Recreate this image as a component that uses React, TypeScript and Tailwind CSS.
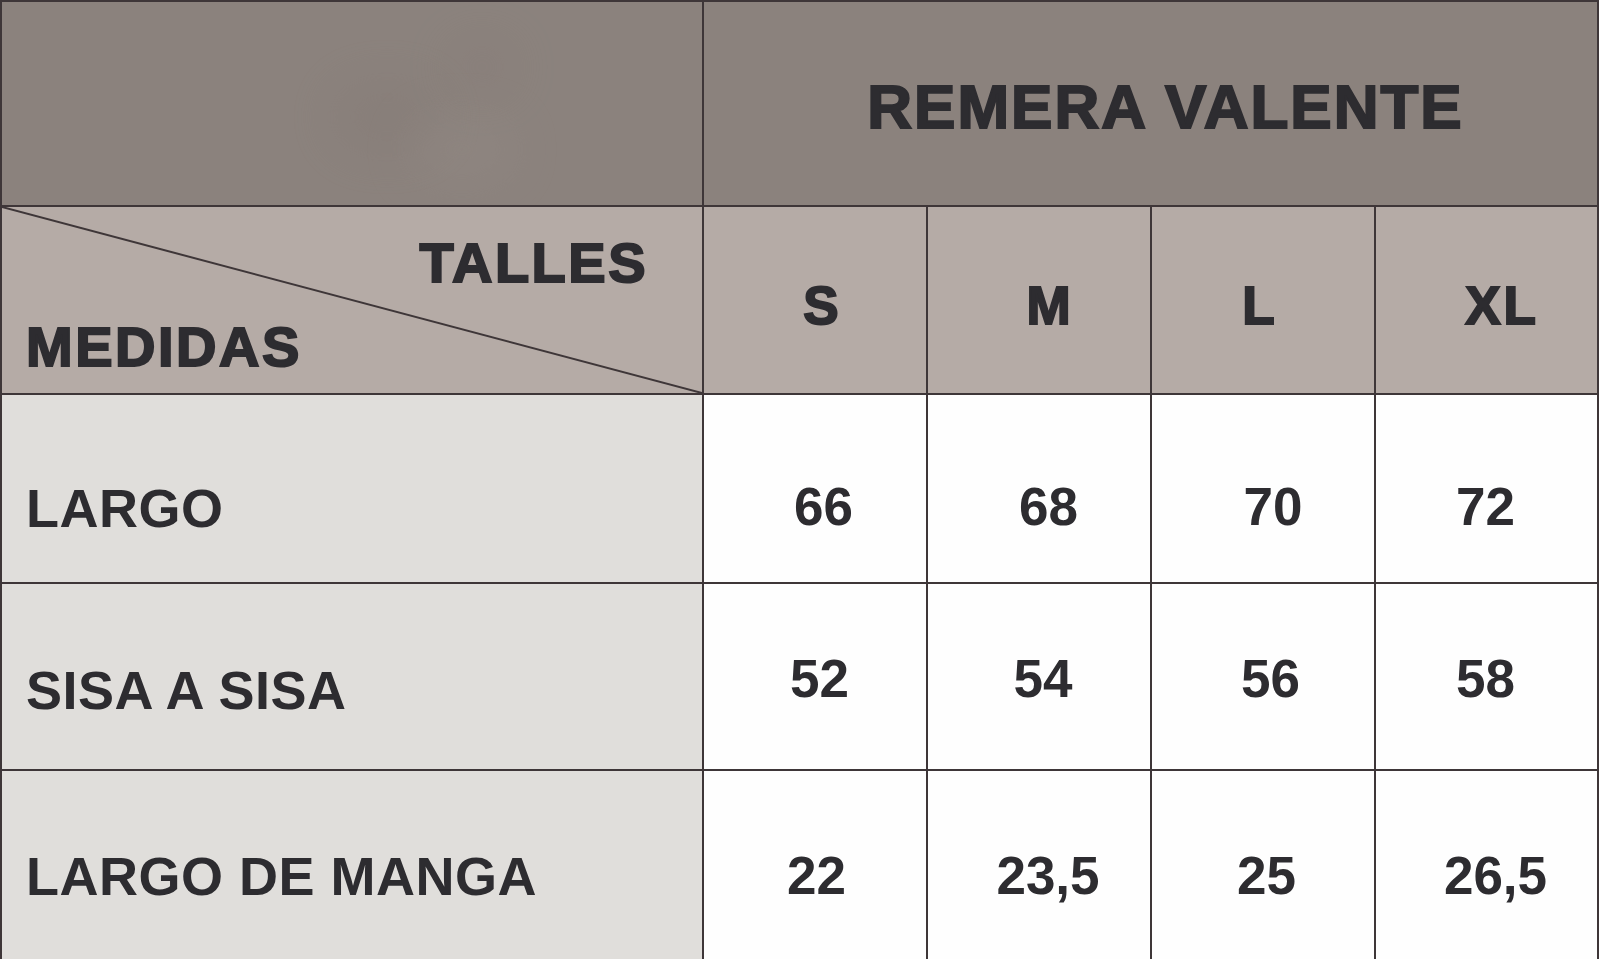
import React from "react";

const font = "font-['Liberation_Sans',Arial,sans-serif]";
const heavy = `${font} font-bold text-[#2d2c30] [-webkit-text-stroke:2px_#2d2c30] leading-none`;
const bold = `${font} font-bold text-[#2d2c30] leading-none`;

type Row = {
  label: string;
  labelPad: string;
  cells: { v: string; cls: string }[];
};

const rows: Row[] = [
  {
    label: "LARGO",
    labelPad: "pt-[38px]",
    cells: [
      { v: "66", cls: "pt-[36px] pl-[17px]" },
      { v: "68", cls: "pt-[36px] pl-[19px]" },
      { v: "70", cls: "pt-[36px] pl-[20px]" },
      { v: "72", cls: "pt-[36px] pr-[2px]" },
    ],
  },
  {
    label: "SISA A SISA",
    labelPad: "pt-[26px]",
    cells: [
      { v: "52", cls: "pt-[4px] pl-[9px]" },
      { v: "54", cls: "pt-[4px] pl-[8px]" },
      { v: "56", cls: "pt-[4px] pl-[15px]" },
      { v: "58", cls: "pt-[4px] pr-[2px]" },
    ],
  },
  {
    label: "LARGO DE MANGA",
    labelPad: "pt-[21px]",
    cells: [
      { v: "22", cls: "pt-[21px] pl-[3px]" },
      { v: "23,5", cls: "pt-[21px] pl-[18px]" },
      { v: "25", cls: "pt-[21px] pl-[7px]" },
      { v: "26,5", cls: "pt-[21px] pl-[18px]" },
    ],
  },
];

const sizes = [
  { v: "S", cls: "pl-[15px]" },
  { v: "M", cls: "pl-[22px]" },
  { v: "L", cls: "pr-[6px]" },
  { v: "XL", cls: "pl-[31px]" },
];

export default function App() {
  return (
    <div className="w-[1600px] h-[959px] overflow-hidden bg-white">
      <div className="w-[1599px] grid grid-cols-[700px_222px_222px_222px_221px] grid-rows-[203px_186px_187px_185px_188px] gap-[2px] bg-[#3e3638] pt-[2px] pl-[2px] pr-[2px]">
        {/* top-left cell with faint watermark */}
        <div className="relative bg-[#8b827d] overflow-hidden">
          <div className="absolute left-[330px] top-[80px] w-[110px] h-[70px] rounded-full bg-[#817772] opacity-30 blur-xl" />
          <div className="absolute left-[450px] top-[40px] w-[60px] h-[50px] rounded-full bg-[#817772] opacity-25 blur-xl" />
          <div className="absolute left-[410px] top-[120px] w-[100px] h-[55px] rounded-full bg-[#948b86] opacity-40 blur-xl" />
        </div>
        {/* title */}
        <div className="col-span-4 bg-[#8b827d] flex items-center justify-center pt-[6px] pl-[30px]">
          <span className={`${heavy} text-[62px] tracking-[2px]`}>REMERA VALENTE</span>
        </div>

        {/* diagonal header cell */}
        <div className="relative bg-[#b5aba6] flex flex-col justify-between pt-[28px] pb-[18px] pl-[24px] pr-[54px]">
          <svg className="absolute inset-0 w-full h-full" viewBox="0 0 700 186" preserveAspectRatio="none">
            <line x1="0" y1="0" x2="700" y2="186" stroke="#3e3638" strokeWidth="2" vectorEffect="non-scaling-stroke" />
          </svg>
          <span className={`${heavy} relative text-[56px] tracking-[2.5px] self-end`}>TALLES</span>
          <span className={`${heavy} relative text-[56px] tracking-[2.5px] self-start`}>MEDIDAS</span>
        </div>
        {sizes.map((s) => (
          <div key={s.v} className={`bg-[#b5aba6] flex items-center justify-center pt-[10px] ${s.cls}`}>
            <span className={`${heavy} text-[53px] tracking-[3px]`}>{s.v}</span>
          </div>
        ))}

        {rows.map((r) => (
          <React.Fragment key={r.label}>
            <div className={`bg-[#e0dedb] flex items-center pl-[24px] ${r.labelPad}`}>
              <span className={`${bold} text-[54px] tracking-[0.5px]`}>{r.label}</span>
            </div>
            {r.cells.map((c, i) => (
              <div key={i} className={`bg-[#fefefe] flex items-center justify-center ${c.cls}`}>
                <span className={`${bold} text-[53px]`}>{c.v}</span>
              </div>
            ))}
          </React.Fragment>
        ))}
      </div>
    </div>
  );
}
